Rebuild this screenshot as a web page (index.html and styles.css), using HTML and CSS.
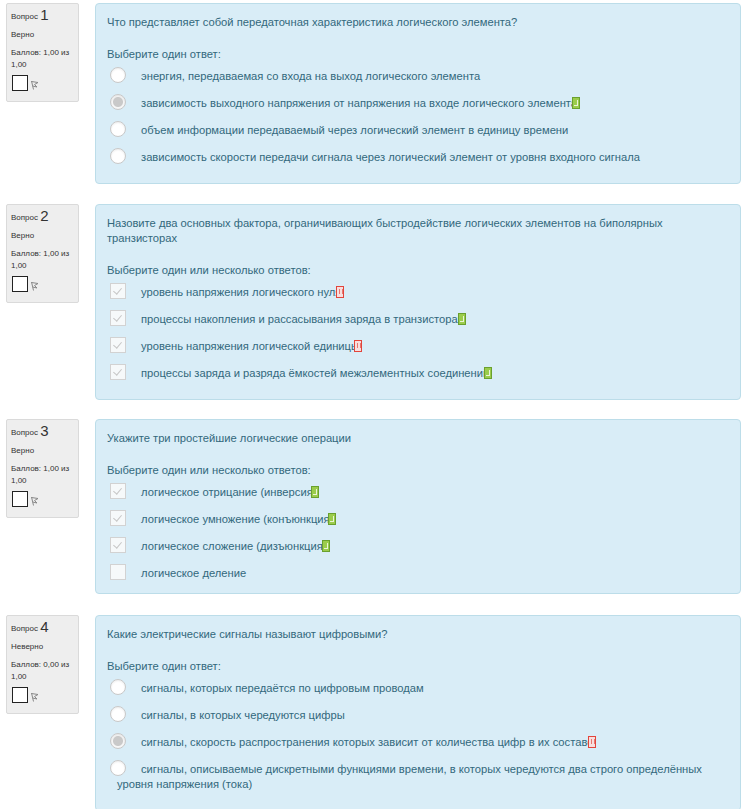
FILE: index.html
```html
<!DOCTYPE html>
<html lang="ru">
<head>
<meta charset="utf-8">
<title>Тест</title>
<link rel="stylesheet" href="styles.css">
</head>
<body>
<div class="page">

  <div class="que">
    <div class="info">
      <div class="no">Вопрос <span class="qno">1</span></div>
      <div class="state">Верно</div>
      <div class="grade">Баллов: 1,00 из 1,00</div>
      <div class="flagrow"><span class="flagbox"></span><svg class="flag" width="9" height="10" viewBox="0 0 9 10"><path d="M1.5 1 L3.5 9.5 M1.5 1.5 L8 2.5 L4.5 4.5 L7 7 L2.7 6" fill="none" stroke="#888" stroke-width="1"/></svg></div>
    </div>
    <div class="content">
      <div class="qtext">Что представляет собой передаточная характеристика логического элемента?</div>
      <div class="prompt">Выберите один ответ:</div>
      <div class="answer">
        <div class="opt"><span class="radio"></span><span class="lbl">энергия, передаваемая со входа на выход логического элемента</span></div>
        <div class="opt"><span class="radio on"></span><span class="lbl">зависимость выходного напряжения от напряжения на входе логического элемента</span><span class="fb ok"></span></div>
        <div class="opt"><span class="radio"></span><span class="lbl">объем информации передаваемый через логический элемент в единицу времени</span></div>
        <div class="opt"><span class="radio"></span><span class="lbl">зависимость скорости передачи сигнала через логический элемент от уровня входного сигнала</span></div>
      </div>
    </div>
  </div>

  <div class="que q2">
    <div class="info">
      <div class="no">Вопрос <span class="qno">2</span></div>
      <div class="state">Верно</div>
      <div class="grade">Баллов: 1,00 из 1,00</div>
      <div class="flagrow"><span class="flagbox"></span><svg class="flag" width="9" height="10" viewBox="0 0 9 10"><path d="M1.5 1 L3.5 9.5 M1.5 1.5 L8 2.5 L4.5 4.5 L7 7 L2.7 6" fill="none" stroke="#888" stroke-width="1"/></svg></div>
    </div>
    <div class="content">
      <div class="qtext">Назовите два основных фактора, ограничивающих быстродействие логических элементов на биполярных транзисторах</div>
      <div class="prompt">Выберите один или несколько ответов:</div>
      <div class="answer">
        <div class="opt"><span class="check on"></span><span class="lbl">уровень напряжения логического нуля</span><span class="fb bad"></span></div>
        <div class="opt"><span class="check on"></span><span class="lbl">процессы накопления и рассасывания заряда в транзисторах</span><span class="fb ok"></span></div>
        <div class="opt"><span class="check on"></span><span class="lbl">уровень напряжения логической единицы</span><span class="fb bad"></span></div>
        <div class="opt"><span class="check on"></span><span class="lbl">процессы заряда и разряда ёмкостей межэлементных соединений</span><span class="fb ok"></span></div>
      </div>
    </div>
  </div>

  <div class="que q3">
    <div class="info">
      <div class="no">Вопрос <span class="qno">3</span></div>
      <div class="state">Верно</div>
      <div class="grade">Баллов: 1,00 из 1,00</div>
      <div class="flagrow"><span class="flagbox"></span><svg class="flag" width="9" height="10" viewBox="0 0 9 10"><path d="M1.5 1 L3.5 9.5 M1.5 1.5 L8 2.5 L4.5 4.5 L7 7 L2.7 6" fill="none" stroke="#888" stroke-width="1"/></svg></div>
    </div>
    <div class="content short">
      <div class="qtext">Укажите три простейшие логические операции</div>
      <div class="prompt">Выберите один или несколько ответов:</div>
      <div class="answer">
        <div class="opt"><span class="check on"></span><span class="lbl">логическое отрицание (инверсия)</span><span class="fb ok"></span></div>
        <div class="opt"><span class="check on"></span><span class="lbl">логическое умножение (конъюнкция)</span><span class="fb ok"></span></div>
        <div class="opt"><span class="check on"></span><span class="lbl">логическое сложение (дизъюнкция)</span><span class="fb ok"></span></div>
        <div class="opt"><span class="check"></span><span class="lbl">логическое деление</span></div>
      </div>
    </div>
  </div>

  <div class="que">
    <div class="info">
      <div class="no">Вопрос <span class="qno">4</span></div>
      <div class="state">Неверно</div>
      <div class="grade">Баллов: 0,00 из 1,00</div>
      <div class="flagrow"><span class="flagbox"></span><svg class="flag" width="9" height="10" viewBox="0 0 9 10"><path d="M1.5 1 L3.5 9.5 M1.5 1.5 L8 2.5 L4.5 4.5 L7 7 L2.7 6" fill="none" stroke="#888" stroke-width="1"/></svg></div>
    </div>
    <div class="content">
      <div class="qtext">Какие электрические сигналы называют цифровыми?</div>
      <div class="prompt">Выберите один ответ:</div>
      <div class="answer">
        <div class="opt"><span class="radio"></span><span class="lbl">сигналы, которых передаётся по цифровым проводам</span></div>
        <div class="opt"><span class="radio"></span><span class="lbl">сигналы, в которых чередуются цифры</span></div>
        <div class="opt"><span class="radio on"></span><span class="lbl">сигналы, скорость распространения которых зависит от количества цифр в их составе</span><span class="fb bad"></span></div>
        <div class="opt"><span class="radio"></span><span class="lbl">сигналы, описываемые дискретными функциями времени, в которых чередуются два строго определённых уровня напряжения (тока)</span></div>
      </div>
    </div>
  </div>

</div>
</body>
</html>
```

FILE: styles.css
```css
html, body {
  margin: 0;
  padding: 0;
  background: #fff;
}
body {
  font-family: "Liberation Sans", Arial, sans-serif;
  color: #32687c;
}
.page {
  padding: 3px 10px 0 6px;
}
.que {
  display: flex;
  align-items: flex-start;
  gap: 16px;
  margin-bottom: 20px;
}
.que.q2 {
  margin-bottom: 19px;
}
.que.q3 {
  margin-bottom: 21px;
}
.info {
  flex: 0 0 auto;
  width: 64px;
  height: 87px;
  padding: 4px 3px 6px 4px;
  background: #eeeeee;
  border: 1px solid #dadada;
  border-radius: 2px;
  font-size: 8px;
  line-height: 12px;
  color: #333;
}
.info .no {
  line-height: 14px;
}
.info .qno {
  font-size: 15px;
  vertical-align: -1px;
}
.info .state {
  margin-top: 5px;
}
.info .grade {
  margin-top: 6px;
}
.flagrow {
  display: flex;
  align-items: flex-end;
  margin-top: 4px;
  margin-left: 1px;
}
.flagbox {
  display: inline-block;
  width: 14px;
  height: 14px;
  background: #fff;
  border: 1px solid #222;
}
.flag {
  margin-left: 2px;
  margin-bottom: 1px;
}
.content {
  flex: 1 1 auto;
  background: #d9edf7;
  border: 1px solid #bcdde9;
  border-radius: 4px;
  padding: 11px 11px 12px 11px;
  font-size: 11.2px;
  line-height: 15px;
}
.content.short {
  padding-bottom: 6px;
}
.prompt {
  margin-top: 17px;
  margin-bottom: 1px;
}
.opt {
  padding: 6px 0 6px 10px;
}
.radio, .check {
  display: inline-block;
  box-sizing: border-box;
  width: 16px;
  height: 16px;
  margin: -2px 15px -2px -7px;
  vertical-align: top;
  background: #fff;
  position: relative;
}
.radio {
  border-radius: 50%;
  border: 1px solid #c8c8c8;
  box-shadow: inset 0 1px 2px rgba(0,0,0,0.08);
}
.radio.on {
  background: radial-gradient(circle, #c9c9c9 0, #c9c9c9 4.5px, #f6f6f6 5.5px);
}
.check {
  border: 1px solid #d2d2d2;
  background: #f6f9fa;
}
.check.on::after {
  content: "";
  position: absolute;
  left: 4px;
  top: 2px;
  width: 4px;
  height: 7px;
  border-right: 1px solid #c6c6c6;
  border-bottom: 1px solid #c6c6c6;
  transform: rotate(40deg);
}
.fb {
  display: inline-block;
  box-sizing: border-box;
  width: 8px;
  height: 12px;
  margin-left: -5px;
  vertical-align: -2px;
  position: relative;
}
.fb.ok {
  background: #9bcc4c;
  border: 1px solid #6aa12e;
}
.fb.ok::after {
  content: "";
  position: absolute;
  left: 1px;
  top: 2px;
  width: 3px;
  height: 5px;
  border-right: 1px solid #e9f5d6;
  border-bottom: 1px solid #e9f5d6;
}
.fb.bad {
  background: #f7dede;
  border: 1px solid #e2453c;
}
.fb.bad::after {
  content: "";
  position: absolute;
  left: 2px;
  top: 2px;
  width: 2px;
  height: 5px;
  border-left: 1px solid #e8776f;
  border-right: 1px solid #e8776f;
}
```
